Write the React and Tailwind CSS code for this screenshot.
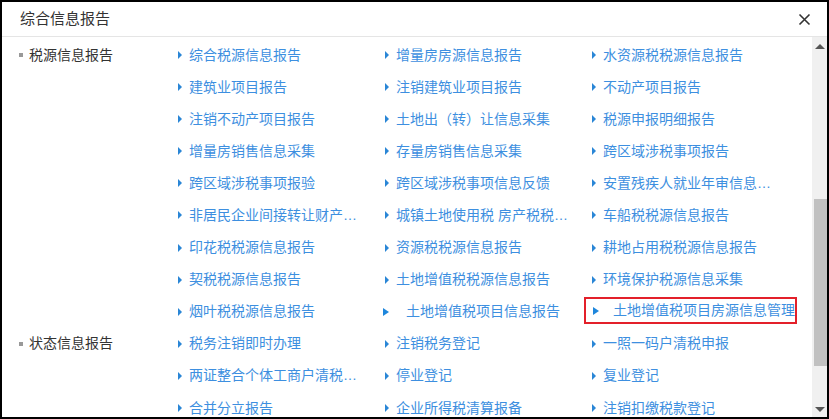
import React from "react"

const sections = [
  {
    title: "税源信息报告",
    rows: [
      ["综合税源信息报告", "增量房房源信息报告", "水资源税税源信息报告"],
      ["建筑业项目报告", "注销建筑业项目报告", "不动产项目报告"],
      ["注销不动产项目报告", "土地出（转）让信息采集", "税源申报明细报告"],
      ["增量房销售信息采集", "存量房销售信息采集", "跨区域涉税事项报告"],
      ["跨区域涉税事项报验", "跨区域涉税事项信息反馈", "安置残疾人就业年审信息报告"],
      ["非居民企业间接转让财产事项报告", "城镇土地使用税 房产税税源信息报告", "车船税税源信息报告"],
      ["印花税税源信息报告", "资源税税源信息报告", "耕地占用税税源信息报告"],
      ["契税税源信息报告", "土地增值税税源信息报告", "环境保护税源信息采集"],
      ["烟叶税税源信息报告", { text: "土地增值税项目信息报告", big: true }, { text: "土地增值税项目房源信息管理", big: true, boxed: true }],
    ],
  },
  {
    title: "状态信息报告",
    rows: [
      ["税务注销即时办理", "注销税务登记", "一照一码户清税申报"],
      ["两证整合个体工商户清税申报", "停业登记", "复业登记"],
      ["合并分立报告", "企业所得税清算报备", "注销扣缴税款登记"],
    ],
  },
]

function Item({ item }) {
  if (typeof item === "string") {
    return (
      <div className="h-8 flex items-center pl-[6px]">
        <span className="w-0 h-0 border-l-[4px] border-l-[#2a86d6] border-y-[4px] border-y-transparent mr-[7px]" />
        <span className="truncate max-w-[175px] text-[#3d8fe0]">{item}</span>
      </div>
    )
  }
  if (item.boxed) {
    return (
      <div className="h-8 flex items-center">
        <div className="w-[218px] h-[27px] -ml-[2px] -mt-[2px] border-2 border-[#e3202a] flex items-center pl-[7px]">
          <span className="w-0 h-0 border-l-[6px] border-l-[#1e86dc] border-y-[4px] border-y-transparent mr-[14px]" />
          <span className="whitespace-nowrap text-[#3d8fe0]">{item.text}</span>
        </div>
      </div>
    )
  }
  return (
    <div className="h-8 flex items-center pl-[4px]">
      <span className="w-0 h-0 border-l-[6px] border-l-[#1e86dc] border-y-[4px] border-y-transparent mr-[17px]" />
      <span className="whitespace-nowrap text-[#3d8fe0]">{item.text}</span>
    </div>
  )
}

export default function App() {
  return (
    <div
      className="w-[829px] h-[419px] bg-white border-2 border-black flex flex-col overflow-hidden text-[14px]"
      style={{ fontFamily: '"Liberation Sans", "Noto Sans CJK SC", sans-serif' }}
    >
      {/* HEADER */}
      <div className="h-[35px] shrink-0 border-b border-[#e5e5e5] flex items-center justify-between pl-[18px] pr-[16px]">
        <span className="text-[15px] text-[#333]">综合信息报告</span>
        <svg width="13" height="13" viewBox="0 0 13 13">
          <path d="M1.5 1.5 L11.5 11.5 M11.5 1.5 L1.5 11.5" stroke="#333" strokeWidth="1.6" />
        </svg>
      </div>

      {/* BODY */}
      <div className="flex flex-1 min-h-0">
        <div className="flex-1 overflow-hidden pt-[2px]">
          {sections.map((sec) => (
            <div key={sec.title} className="flex">
              <div className="w-[170px] shrink-0 h-8 flex items-center pl-[17px]">
                <span className="w-[4px] h-[4px] bg-[#999] mr-[6px]" />
                <span className="text-[#333]">{sec.title}</span>
              </div>
              <div className="grid grid-cols-[207px_207px_207px] auto-rows-[32.1px]">
                {sec.rows.map((row, i) =>
                  row.map((item, j) => <Item key={i + "-" + j} item={item} />)
                )}
              </div>
            </div>
          ))}
        </div>

        {/* SCROLLBAR */}
        <div className="w-[15px] shrink-0 bg-[#f0f0f0] flex flex-col items-center">
          <div className="h-[19px] flex items-center justify-center">
            <span className="w-0 h-0 border-b-[5px] border-b-[#555] border-x-[5px] border-x-transparent" />
          </div>
          <div className="h-[143px]" />
          <div className="w-[13px] ml-[2px] h-[167px] bg-[#c1c1c1]" />
          <div className="flex-1" />
          <div className="h-[16px] flex items-center justify-center">
            <span className="w-0 h-0 border-t-[5px] border-t-[#555] border-x-[5px] border-x-transparent" />
          </div>
        </div>
      </div>
    </div>
  )
}
